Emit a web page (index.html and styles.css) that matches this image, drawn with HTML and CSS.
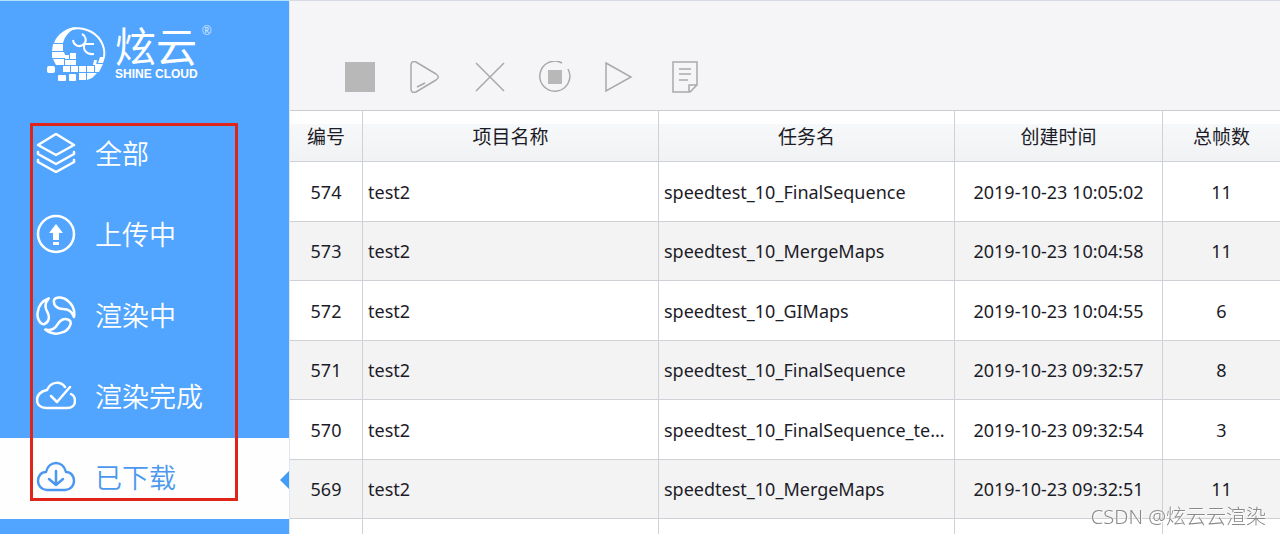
FILE: index.html
```
<!DOCTYPE html>
<html lang="zh-CN">
<head>
    <meta charset="UTF-8">
    <meta name="viewport" content="width=device-width, initial-scale=1.0">
    <title>炫云</title>
    <link rel="stylesheet" href="styles.css">
</head>
<body>

<!-- Left sidebar -->
<aside class="sidebar">
    <div class="logo">
        <svg class="logo-mark" viewBox="0 0 60 60" aria-hidden="true">
            <path d="M13 17C18 7 30 4 40 8C52 12 59 24 57 35" fill="none" stroke="#fff" stroke-width="2"/>
            <path d="M30 5C20 5 10 12 7 21H16C18 13 24 8 30 5Z" fill="#fff"/>
            <path d="M6 22H16L16 29H5ZM5 30H17L19 36H5ZM6 37H17V43H9Z" fill="#fff"/>
            <path d="M18 33H22V37H18ZM23 31H29V37H23ZM18 38H29V43H18ZM53 35H58L56 41H51ZM47 38H50L49 43H46Z" fill="#fff"/>
            <path d="M16 44H23V50H16ZM24 44H31V50H24ZM32 44H39V50H32ZM40 44H47V50H40ZM48 42H56L52 50H48Z" fill="#fff"/>
            <path d="M32 51H39V58H32ZM40 51H50L45 56L40 58Z" fill="#fff"/>
            <rect x="0" y="44" width="8" height="7" rx="2" fill="#fff"/>
            <rect x="11" y="53" width="8" height="6" rx="1" fill="#fff"/>
            <rect x="22" y="52" width="7" height="7" rx="1" fill="#fff"/>
            <path d="M26 18C27 24 33 26 37 22C40 19 39 14 35 12M37 22H47M38 21C35 27 39 33 47 32" fill="none" stroke="#fff" stroke-width="2"/>
        </svg>
        <div class="logo-text">
            <span class="logo-cn">炫云</span>
            <span class="logo-en">SHINE CLOUD</span>
        </div>
        <span class="logo-reg">®</span>
    </div>

    <nav class="menu">
        <a class="menu-item" href="#all">
            <svg viewBox="0 0 40 40" aria-hidden="true">
                <path d="M20 1L38 12L20 22L2 12ZM2 19V21L20 31L38 21V19M2 27V29L20 39L38 29V27"/>
            </svg>
            全部
        </a>
        <a class="menu-item" href="#uploading">
            <svg viewBox="0 0 40 40" aria-hidden="true">
                <circle cx="20" cy="20" r="18"/>
                <path class="solid" d="M20 10L27 19H23V26H17V19H13ZM17 28H23V31H17Z"/>
            </svg>
            上传中
        </a>
        <a class="menu-item" href="#rendering">
            <svg viewBox="0 0 40 40" aria-hidden="true">
                <g id="blade">
                    <path d="M38 22C36 16 32 14 27 14C21 14 17 10 18 5C20 1 28 2 32 6C37 10 39 16 38 22Z"/>
                </g>
                <use href="#blade" transform="rotate(120 20 20)"/>
                <use href="#blade" transform="rotate(240 20 20)"/>
            </svg>
            渲染中
        </a>
        <a class="menu-item" href="#rendered">
            <svg viewBox="0 0 40 40" aria-hidden="true">
                <path d="M29 11C25 5 15 5 11 14C5 15 1 19 1 24C1 29 5 32 10 32H31C36 32 39 29 39 25C39 21 37 19 35 18M15 20L21 26L34 11"/>
            </svg>
            渲染完成
        </a>
        <a class="menu-item active" href="#downloaded">
            <svg viewBox="0 0 40 40" aria-hidden="true">
                <path d="M10 15C13 3 27 3 30 15C35 15 38 19 38 24C38 29 34 33 29 33H11C6 33 2 29 2 24C2 19 5 15 10 15ZM20 14V28M13 22L20 28L27 22"/>
            </svg>
            已下载
        </a>
        <div class="highlight"></div>
    </nav>
</aside>

<!-- Toolbar and task table -->
<main class="content">
    <div class="toolbar">
        <button type="button" aria-label="全部停止">
            <svg viewBox="0 0 32 32"><rect class="fill" x="1" y="1" width="30" height="30"/></svg>
        </button>
        <button type="button" aria-label="继续">
            <svg viewBox="0 0 32 32"><path d="M2 4C2 1 4 0 7 1L27 13C30 15 30 17 27 19L7 31C4 32 2 31 2 28ZM8 26L16 22"/></svg>
        </button>
        <button type="button" aria-label="删除">
            <svg viewBox="0 0 32 32"><path d="M2 2L30 30M30 2L2 30"/></svg>
        </button>
        <button type="button" aria-label="停止">
            <svg viewBox="0 0 32 32"><path d="M23 2A15 15 0 1 0 29 8"/><rect class="fill" x="9" y="9" width="14" height="14"/></svg>
        </button>
        <button type="button" aria-label="开始">
            <svg viewBox="0 0 32 32"><path d="M2 2L27 16L2 30Z"/></svg>
        </button>
        <button type="button" aria-label="日志">
            <svg viewBox="0 0 32 32"><path d="M4 1H28V24L21 31H4ZM20 31V24H28M10 8H22M10 13H22M10 19H19"/></svg>
        </button>
    </div>

    <table id="task_table">
        <colgroup>
            <col class="col-id">
            <col>
            <col>
            <col class="col-time">
            <col class="col-frames">
        </colgroup>
        <thead>
            <tr>
                <th>编号</th>
                <th>项目名称</th>
                <th>任务名</th>
                <th>创建时间</th>
                <th>总帧数</th>
            </tr>
        </thead>
        <tbody>
            <tr>
                <td>574</td>
                <td class="name">test2</td>
                <td class="name">speedtest_10_FinalSequence</td>
                <td>2019-10-23 10:05:02</td>
                <td>11</td>
            </tr>
            <tr>
                <td>573</td>
                <td class="name">test2</td>
                <td class="name">speedtest_10_MergeMaps</td>
                <td>2019-10-23 10:04:58</td>
                <td>11</td>
            </tr>
            <tr>
                <td>572</td>
                <td class="name">test2</td>
                <td class="name">speedtest_10_GIMaps</td>
                <td>2019-10-23 10:04:55</td>
                <td>6</td>
            </tr>
            <tr>
                <td>571</td>
                <td class="name">test2</td>
                <td class="name">speedtest_10_FinalSequence</td>
                <td>2019-10-23 09:32:57</td>
                <td>8</td>
            </tr>
            <tr>
                <td>570</td>
                <td class="name">test2</td>
                <td class="name">speedtest_10_FinalSequence_te...</td>
                <td>2019-10-23 09:32:54</td>
                <td>3</td>
            </tr>
            <tr>
                <td>569</td>
                <td class="name">test2</td>
                <td class="name">speedtest_10_MergeMaps</td>
                <td>2019-10-23 09:32:51</td>
                <td>11</td>
            </tr>
            <tr>
                <td></td>
                <td></td>
                <td></td>
                <td></td>
                <td></td>
            </tr>
        </tbody>
    </table>
</main>

<div class="watermark">CSDN @炫云云渲染</div>

</body>
</html>
```

FILE: styles.css
```
html, body {
    height: 100%;
    margin: 0;
    overflow: hidden; /* Prevent scrolling of the entire page */
}

body {
    display: flex;
    font-family: "Noto Sans", "Noto Sans CJK SC", sans-serif;
    font-size: 18px;
    color: #1c1c28;
    background-color: #fff;
}

/* Left sidebar */
.sidebar {
    width: 289px;
    flex-shrink: 0;
    box-sizing: border-box;
    border-top: 1px solid #b5e2fb;
    background-color: #51a5ff;
}

.logo {
    display: flex;
    box-sizing: border-box;
    height: 113px;
    padding: 20px 0 0 47px;
}

.logo-mark {
    width: 60px;
    height: 62px;
}

.logo-text {
    display: flex;
    flex-direction: column;
    margin-left: 8px;
    color: #fff;
}

.logo-cn {
    font-family: "Noto Sans CJK SC", sans-serif;
    font-size: 41px;
    font-weight: 400;
    line-height: 46px;
}

.logo-en {
    font-family: "Liberation Sans", sans-serif;
    font-size: 12px;
    font-weight: bold;
    line-height: 14px;
}

.logo-reg {
    margin-left: 4px;
    font-size: 12px;
    line-height: 20px;
    color: #cfe6ff;
}

.menu {
    position: relative;
}

.menu-item {
    position: relative;
    display: flex;
    align-items: center;
    gap: 19px;
    box-sizing: border-box;
    height: 81px;
    padding: 0 0 4px 36px;
    font-family: "Noto Sans CJK SC", sans-serif;
    font-size: 27px;
    font-weight: 350;
    line-height: 40px;
    color: #fff;
    text-decoration: none;
}

.menu-item svg {
    width: 40px;
    height: 40px;
    fill: none;
    stroke: currentColor;
    stroke-width: 2.5;
    stroke-linejoin: round;
    stroke-linecap: round;
}

.menu-item .solid {
    fill: currentColor;
    stroke: none;
}

.menu-item.active {
    background-color: #fefefe;
    color: #4b98ee;
}

/* Arrow on the right edge of the active item */
.menu-item.active::after {
    content: "";
    position: absolute;
    right: 0;
    top: 33px;
    border: 9px solid transparent;
    border-left: none;
    border-right-color: #459cf5;
}

/* Red frame around the menu */
.highlight {
    position: absolute;
    top: 9px;
    bottom: 18px;
    left: 30px;
    width: 202px;
    border: 3px solid #df2419;
    pointer-events: none;
}

.content {
    flex: 1;
    min-width: 0;
    border-left: 1px solid #dfe6f0;
}

.toolbar {
    display: flex;
    align-items: flex-end;
    gap: 33px;
    box-sizing: border-box;
    height: 111px;
    padding: 0 54px 17px;
    border-top: 1px solid #d5dae3;
    border-bottom: 1px solid #ccc;
    background-color: #f5f4f6;
}

.toolbar button {
    width: 32px;
    height: 32px;
    padding: 0;
    border: none;
    background: none;
}

.toolbar svg {
    display: block;
    width: 32px;
    height: 32px;
    fill: none;
    stroke: #a9a9ad;
    stroke-width: 1.5;
}

.toolbar .fill {
    fill: #b8b8b8;
    stroke: none;
}

/* Task table */
table {
    width: 100%;
    table-layout: fixed;
    border-collapse: separate;
    border-spacing: 0;
}

.col-id {
    width: 73px;
}

.col-time {
    width: 208px;
}

.col-frames {
    width: 117px;
}

th, td {
    box-sizing: border-box;
    height: 59px;
    padding: 0;
    border-right: 1px solid #ced1d6;
    border-bottom: 1px solid #ced1d6;
    text-align: center;
    white-space: nowrap;
    overflow: hidden;
}

th {
    height: 51px;
    background: linear-gradient(#fff 25%, #f7f8fa 25%, #f1f2f4);
    font-size: 19px;
    font-weight: normal;
}

th:last-child, td:last-child {
    border-right: none;
}

tr:nth-child(odd) td {
    height: 60px;
}

tr:nth-child(even) td {
    background-color: #f3f3f3;
}

td.name {
    padding-left: 5px;
    text-align: left;
}

.watermark {
    position: fixed;
    right: 14px;
    bottom: 4px;
    font-family: "Noto Sans", "Noto Sans CJK SC", sans-serif;
    font-size: 20px;
    font-weight: 300;
    line-height: 26px;
    color: #8a8a8a;
    text-shadow: 1px 1px 0 #fff;
}
```
